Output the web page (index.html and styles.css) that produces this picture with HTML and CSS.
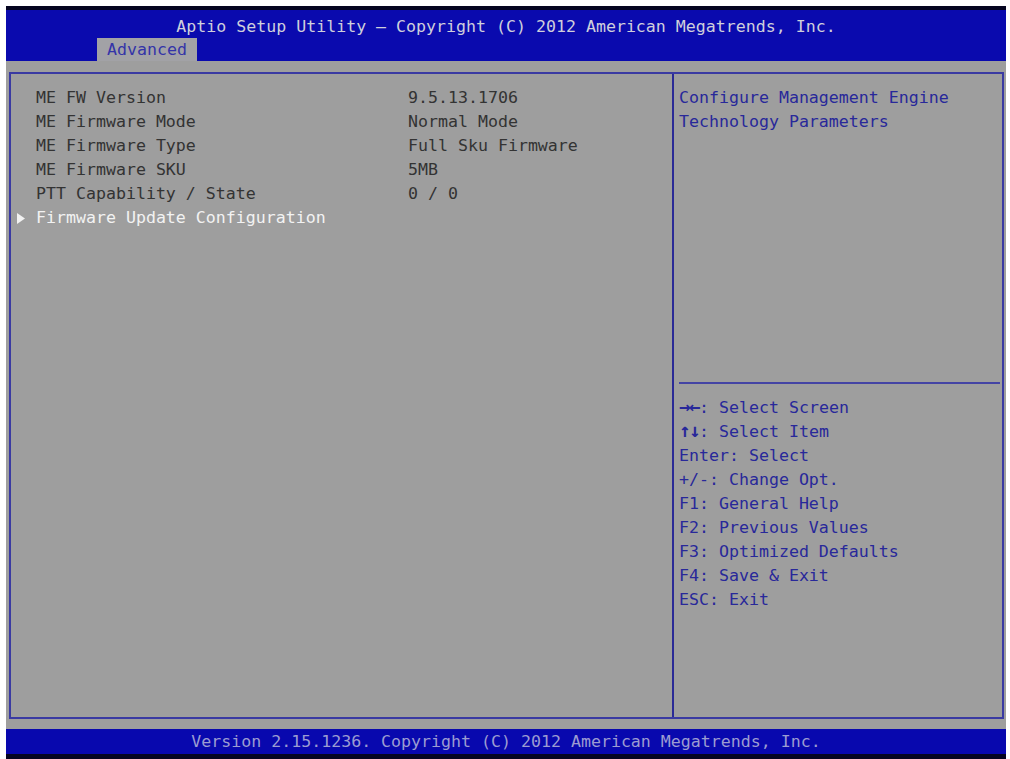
FILE: index.html
```html
<!DOCTYPE html>
<html lang="en">
<head>
    <meta charset="UTF-8">
    <meta name="viewport" content="width=device-width, initial-scale=1.0">
    <title>Aptio Setup Utility</title>
    <link rel="stylesheet" href="styles.css">
</head>
<body>
    <div class="screen">
        <div class="topbar">
            <div class="title">Aptio Setup Utility &ndash; Copyright (C) 2012 American Megatrends, Inc.</div>
            <div class="tabs">
                <div class="tab">Advanced</div>
            </div>
        </div>
        <div class="main">
            <div class="frame">
                <div class="items">
                    <div class="row">
                        <span class="marker"></span>
                        <span class="label">ME FW Version</span>
                        <span class="value">9.5.13.1706</span>
                    </div>
                    <div class="row">
                        <span class="marker"></span>
                        <span class="label">ME Firmware Mode</span>
                        <span class="value">Normal Mode</span>
                    </div>
                    <div class="row">
                        <span class="marker"></span>
                        <span class="label">ME Firmware Type</span>
                        <span class="value">Full Sku Firmware</span>
                    </div>
                    <div class="row">
                        <span class="marker"></span>
                        <span class="label">ME Firmware SKU</span>
                        <span class="value">5MB</span>
                    </div>
                    <div class="row">
                        <span class="marker"></span>
                        <span class="label">PTT Capability / State</span>
                        <span class="value">0 / 0</span>
                    </div>
                    <div class="row selected">
                        <span class="marker">
                            <svg width="8" height="11" viewBox="0 0 8 11"><polygon points="0,0 8,5.5 0,11" fill="#f2f2f2"/></svg>
                        </span>
                        <span class="label">Firmware Update Configuration</span>
                    </div>
                </div>
                <div class="side">
                    <div class="help">
                        <div>Configure Management Engine</div>
                        <div>Technology Parameters</div>
                    </div>
                    <div class="divider"></div>
                    <div class="keys">
                        <div class="key"><span class="arrows">&rarr;&larr;</span>: Select Screen</div>
                        <div class="key"><span class="arrows">&uarr;&darr;</span>: Select Item</div>
                        <div class="key">Enter: Select</div>
                        <div class="key">+/-: Change Opt.</div>
                        <div class="key">F1: General Help</div>
                        <div class="key">F2: Previous Values</div>
                        <div class="key">F3: Optimized Defaults</div>
                        <div class="key">F4: Save &amp; Exit</div>
                        <div class="key">ESC: Exit</div>
                    </div>
                </div>
            </div>
        </div>
        <div class="footer">Version 2.15.1236. Copyright (C) 2012 American Megatrends, Inc.</div>
    </div>
</body>
</html>
```

FILE: styles.css
```css
* {
    margin: 0;
    padding: 0;
    box-sizing: border-box;
}
body {
    background: #ffffff;
    font-family: "DejaVu Sans Mono", "Liberation Mono", monospace;
    font-size: 16.6px;
}
.screen {
    margin: 6px 0 0 6px;
    width: 1000px;
    height: 753px;
    display: flex;
    flex-direction: column;
    background: #9e9e9e;
}
.topbar {
    height: 55px;
    border-top: 4px solid #050520;
    background: #0a0aae;
    display: flex;
    flex-direction: column;
}
.title {
    padding-top: 6px;
    height: 28px;
    line-height: 22px;
    text-align: center;
    color: #cfcfdc;
}
.tabs {
    display: flex;
    padding-left: 91px;
}
.tab {
    height: 23px;
    line-height: 24px;
    padding: 0 10px;
    width: 100px;
    background: #a2a2a6;
    color: #3434a8;
}
.main {
    flex: 1;
    padding: 11px 2px 10px 3px;
}
.frame {
    height: 100%;
    border: 2px solid #3a3aa2;
    display: flex;
}
.items {
    width: 663px;
    padding-top: 12px;
    border-right: 2px solid #2a2a96;
    color: #333333;
}
.row {
    display: flex;
    height: 24px;
    line-height: 24px;
}
.marker {
    width: 25px;
    padding-left: 6px;
    display: flex;
    align-items: center;
}
.label {
    width: 372px;
    white-space: pre;
}
.selected {
    color: #f2f2f2;
}
.side {
    flex: 1;
    display: flex;
    flex-direction: column;
    color: #28289a;
}
.help {
    height: 308px;
    padding: 12px 0 0 5px;
    line-height: 24px;
}
.divider {
    height: 2px;
    margin: 0 2px 0 5px;
    background: #4444a4;
}
.keys {
    padding: 12px 0 0 5px;
}
.key {
    height: 24px;
    line-height: 24px;
    overflow: hidden;
}
.arrows {
    font-size: 19px;
    line-height: 16px;
    font-weight: bold;
    letter-spacing: -1.4px;
}
.footer {
    height: 30px;
    border-bottom: 5px solid #050520;
    background: #0808ae;
    color: #9c9cd2;
    text-align: center;
    line-height: 25px;
}
```
